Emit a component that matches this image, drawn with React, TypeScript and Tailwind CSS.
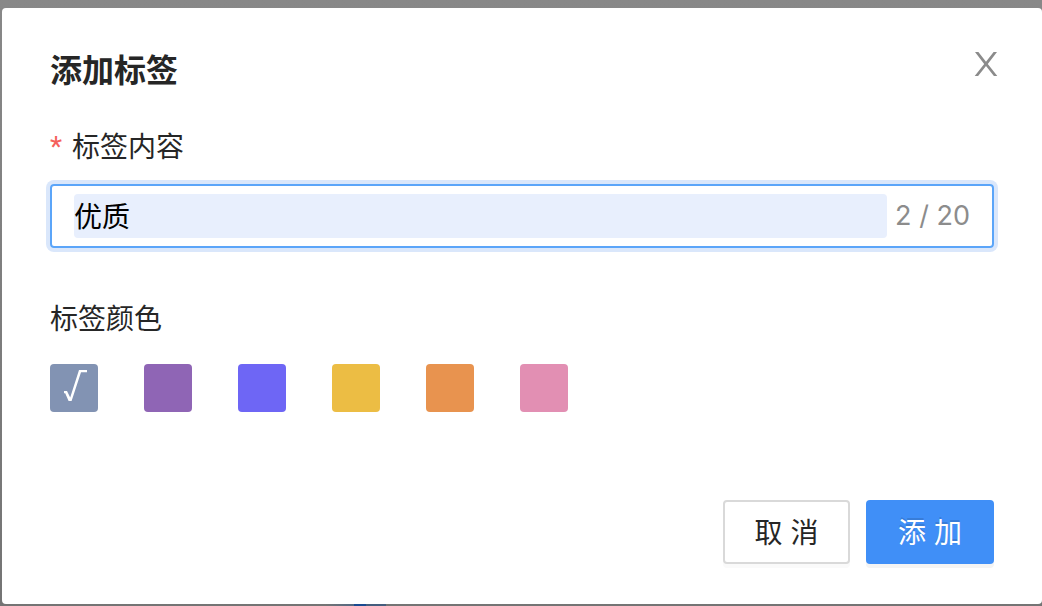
import { useState } from "react";

const COLORS = [
  { name: "灰蓝", className: "bg-[#8293b3]" },
  { name: "紫色", className: "bg-[#8f65b5]" },
  { name: "靛蓝", className: "bg-[#6e66f5]" },
  { name: "黄色", className: "bg-[#ecbd44]" },
  { name: "橙色", className: "bg-[#e8934f]" },
  { name: "粉色", className: "bg-[#e28fb3]" },
];

const MAX_LENGTH = 20;

function CloseIcon() {
  return (
    <svg width="24" height="26" viewBox="0 0 24 26" fill="#8b8b8b" aria-hidden="true">
      <path d="M1 1H4.4L12 10.8 19.6 1H23L13.8 12.9 23.3 25H19.9L12 15 4.1 25H.7L10.2 12.9Z" />
    </svg>
  );
}

function CheckIcon() {
  return (
    <svg width="48" height="48" viewBox="0 0 48 48" fill="#ffffff" aria-hidden="true">
      <path d="M14 27H17L20.2 33.6 29 6H37V8.2H31L21.6 37H18.6L15.2 29.3H14Z" />
    </svg>
  );
}

export default function App() {
  const [content, setContent] = useState("优质");
  const [color, setColor] = useState(0);

  return (
    <div className="flex min-h-screen flex-col bg-linear-to-b from-[#888888] to-[#747474] pt-2 pl-0.5 font-['Inter','Noto_Sans_CJK_SC',sans-serif] text-[28px] text-[#262626]">
      <section role="dialog" aria-labelledby="dialog-title" className="rounded-sm bg-white px-12 pt-10 pb-10">
        <header className="flex items-start justify-between">
          <h1 id="dialog-title" className="text-[32px] leading-[46px] font-bold">
            添加标签
          </h1>
          <button type="button" aria-label="关闭" className="-mr-2 flex h-8 w-8 items-center justify-center">
            <CloseIcon />
          </button>
        </header>

        <form onSubmit={(event) => event.preventDefault()}>
          <label htmlFor="tag-content" className="mt-[31px] flex gap-2 leading-[44px]">
            <span className="w-3.5 font-['Roboto',sans-serif] text-[#f5605c]" aria-hidden="true">*</span>
            标签内容
          </label>
          <div className="mt-[15px] flex h-16 items-center gap-2 rounded-sm border-2 border-[#5ba5f9] px-[22px] shadow-[0_0_0_4px_#dae7fb]">
            <input
              id="tag-content"
              type="text"
              value={content}
              maxLength={MAX_LENGTH}
              onChange={(event) => setContent(event.target.value)}
              className="h-11 min-w-0 flex-1 rounded-sm bg-[#e8effd] pb-0.5 text-black outline-none"
            />
            <span className="text-[27px] text-[#8c8c8c]">
              {content.length} / {MAX_LENGTH}
            </span>
          </div>

          <fieldset className="mt-[49px]">
            <legend className="leading-[44px]">标签颜色</legend>
            <div className="mt-[23px] flex flex-wrap gap-[46px]">
              {COLORS.map((item, index) => (
                <label key={item.name} className={`relative h-12 w-12 rounded-sm ${item.className}`}>
                  <input
                    type="radio"
                    name="tag-color"
                    aria-label={item.name}
                    checked={color === index}
                    onChange={() => setColor(index)}
                    className="absolute inset-0 appearance-none"
                  />
                  {color === index && <CheckIcon />}
                </label>
              ))}
            </div>
          </fieldset>

          <footer className="mt-[88px] flex justify-end gap-4">
            <button type="button" className="h-16 w-[127px] rounded-sm border-2 border-[#d9d9d9] bg-white pt-0.5 shadow-[0_4px_0_#fafafa]">
              取 消
            </button>
            <button type="submit" className="h-16 w-32 rounded-sm bg-[#408ff7] pt-0.5 text-white shadow-[0_4px_0_#f4f4f4] text-shadow-[0_-2px_0_rgb(0_0_0/0.12)]">
              添 加
            </button>
          </footer>
        </form>
      </section>
      <div className="flex h-0.5 pl-[324px]" aria-hidden="true">
        <span className="w-7 bg-linear-to-r from-[#747474] to-[#526883]" />
        <span className="w-3 bg-[#194a91]" />
        <span className="w-5 bg-[#445d7d]" />
      </div>
    </div>
  );
}
